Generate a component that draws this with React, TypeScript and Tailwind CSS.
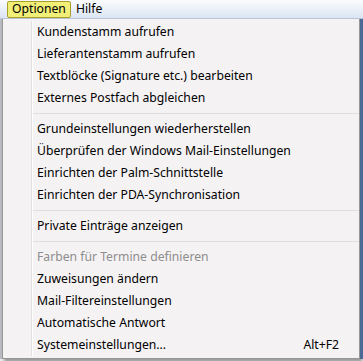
import React from "react";

type Item = { label: string; shortcut?: string; disabled?: boolean } | "sep";

const items: Item[] = [
  { label: "Kundenstamm aufrufen" },
  { label: "Lieferantenstamm aufrufen" },
  { label: "Textblöcke (Signature etc.) bearbeiten" },
  { label: "Externes Postfach abgleichen" },
  "sep",
  { label: "Grundeinstellungen wiederherstellen" },
  { label: "Überprüfen der Windows Mail-Einstellungen" },
  { label: "Einrichten der Palm-Schnittstelle" },
  { label: "Einrichten der PDA-Synchronisation" },
  "sep",
  { label: "Private Einträge anzeigen" },
  "sep",
  { label: "Farben für Termine definieren", disabled: true },
  { label: "Zuweisungen ändern" },
  { label: "Mail-Filtereinstellungen" },
  { label: "Automatische Antwort" },
  { label: "Systemeinstellungen...", shortcut: "Alt+F2" },
];

export default function App() {
  return (
    <div
      className="relative h-[361px] w-[363px] overflow-hidden bg-[#e9ecf1] text-[12.2px] text-black"
      style={{ fontFamily: '"Noto Sans", "Open Sans", sans-serif' }}
    >
      {/* menu bar */}
      <div className="flex h-[19px] items-center gap-[3px] border-b border-[#b9c6d8] bg-gradient-to-b from-[#fbfcfe] to-[#dbe5f3] pl-[7px]">
        <span className="flex h-[17px] items-center rounded-[2px] border border-[#a99e2a] bg-[#f2ef78] px-[4px] leading-none">
          Optionen
        </span>
        <span className="px-[2px] leading-none">Hilfe</span>
      </div>

      <div className="flex">
        <div className="w-[2px] bg-[#b8bcc2]" />
        {/* dropdown */}
        <div className="flex w-[358px] flex-col border border-t-0 border-[#979797] bg-[#f5f2f4] shadow-[2px_3px_3px_rgba(0,0,0,0.35)]">
          <div className="flex py-[2px]">
            <div className="w-[29px] shrink-0 border-r border-r-[#e2dfe1]" />
            <div className="w-px bg-white" />
            <div className="flex flex-1 flex-col">
              {items.map((it, i) =>
                it === "sep" ? (
                  <div key={i} className="flex h-[9px] items-center">
                    <div className="h-px w-full bg-[#e0dddf]" />
                  </div>
                ) : (
                  <div
                    key={i}
                    className={`flex h-[22px] items-center justify-between pl-[4px] pr-[20px] ${
                      it.disabled ? "text-[#8d8d8d]" : ""
                    }`}
                  >
                    <span>{it.label}</span>
                    {it.shortcut && <span>{it.shortcut}</span>}
                  </div>
                )
              )}
            </div>
          </div>
        </div>
        <div className="w-[3px] bg-[#4d6a96]" />
      </div>
    </div>
  );
}
